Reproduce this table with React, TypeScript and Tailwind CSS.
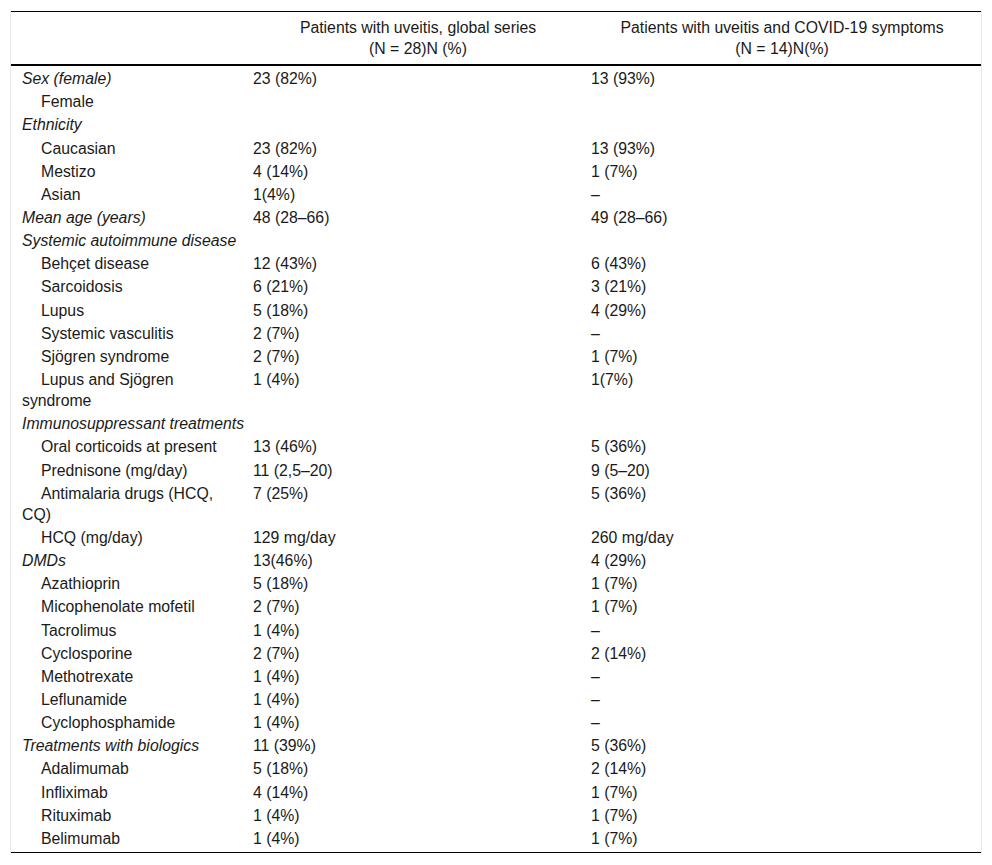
type Row = {
  label: string;
  a?: string;
  b?: string;
  group?: boolean;
};

const rows: Row[] = [
  { label: 'Sex (female)', a: '23 (82%)', b: '13 (93%)', group: true },
  { label: 'Female' },
  { label: 'Ethnicity', group: true },
  { label: 'Caucasian', a: '23 (82%)', b: '13 (93%)' },
  { label: 'Mestizo', a: '4 (14%)', b: '1 (7%)' },
  { label: 'Asian', a: '1(4%)', b: '–' },
  { label: 'Mean age (years)', a: '48 (28–66)', b: '49 (28–66)', group: true },
  { label: 'Systemic autoimmune disease', group: true },
  { label: 'Behçet disease', a: '12 (43%)', b: '6 (43%)' },
  { label: 'Sarcoidosis', a: '6 (21%)', b: '3 (21%)' },
  { label: 'Lupus', a: '5 (18%)', b: '4 (29%)' },
  { label: 'Systemic vasculitis', a: '2 (7%)', b: '–' },
  { label: 'Sjögren syndrome', a: '2 (7%)', b: '1 (7%)' },
  { label: 'Lupus and Sjögren syndrome', a: '1 (4%)', b: '1(7%)' },
  { label: 'Immunosuppressant treatments', group: true },
  { label: 'Oral corticoids at present', a: '13 (46%)', b: '5 (36%)' },
  { label: 'Prednisone (mg/day)', a: '11 (2,5–20)', b: '9 (5–20)' },
  { label: 'Antimalaria drugs (HCQ, CQ)', a: '7 (25%)', b: '5 (36%)' },
  { label: 'HCQ (mg/day)', a: '129 mg/day', b: '260 mg/day' },
  { label: 'DMDs', a: '13(46%)', b: '4 (29%)', group: true },
  { label: 'Azathioprin', a: '5 (18%)', b: '1 (7%)' },
  { label: 'Micophenolate mofetil', a: '2 (7%)', b: '1 (7%)' },
  { label: 'Tacrolimus', a: '1 (4%)', b: '–' },
  { label: 'Cyclosporine', a: '2 (7%)', b: '2 (14%)' },
  { label: 'Methotrexate', a: '1 (4%)', b: '–' },
  { label: 'Leflunamide', a: '1 (4%)', b: '–' },
  { label: 'Cyclophosphamide', a: '1 (4%)', b: '–' },
  { label: 'Treatments with biologics', a: '11 (39%)', b: '5 (36%)', group: true },
  { label: 'Adalimumab', a: '5 (18%)', b: '2 (14%)' },
  { label: 'Infliximab', a: '4 (14%)', b: '1 (7%)' },
  { label: 'Rituximab', a: '1 (4%)', b: '1 (7%)' },
  { label: 'Belimumab', a: '1 (4%)', b: '1 (7%)' },
];

export default function App() {
  return (
    <div className="min-h-screen bg-white pt-[11px] font-['Liberation_Sans',Arial,sans-serif] text-[15.8px] text-[#1a1a1a]">
      <div className="mx-[10px] w-[972px] border-x border-[#e8e8e8]">
        {/* Header */}
        <div className="grid grid-cols-[230px_342px_1fr] border-t border-b-2 border-t-black border-b-black py-[5px] leading-[21px]">
          <div />
          <div className="pl-[12px] text-center">
            Patients with uveitis, global series
            <br />
            (N = 28)N (%)
          </div>
          <div className="pl-[8px] pr-[8px] text-center">
            Patients with uveitis and COVID-19 symptoms
            <br />
            (N = 14)N(%)
          </div>
        </div>

        {/* Body */}
        <div className="border-b border-black pt-[1px] pb-[2px]">
          {rows.map((row, i) => (
            <div
              key={i}
              className="grid grid-cols-[230px_342px_1fr] py-[1.08px] leading-[21px]"
            >
              <div className={row.group ? 'pl-[11px] italic whitespace-nowrap' : 'pl-[11px] indent-[19px]'}>
                {row.label}
              </div>
              <div className="pl-[12px]">{row.a}</div>
              <div className="pl-[8px]">{row.b}</div>
            </div>
          ))}
        </div>
      </div>
    </div>
  );
}
